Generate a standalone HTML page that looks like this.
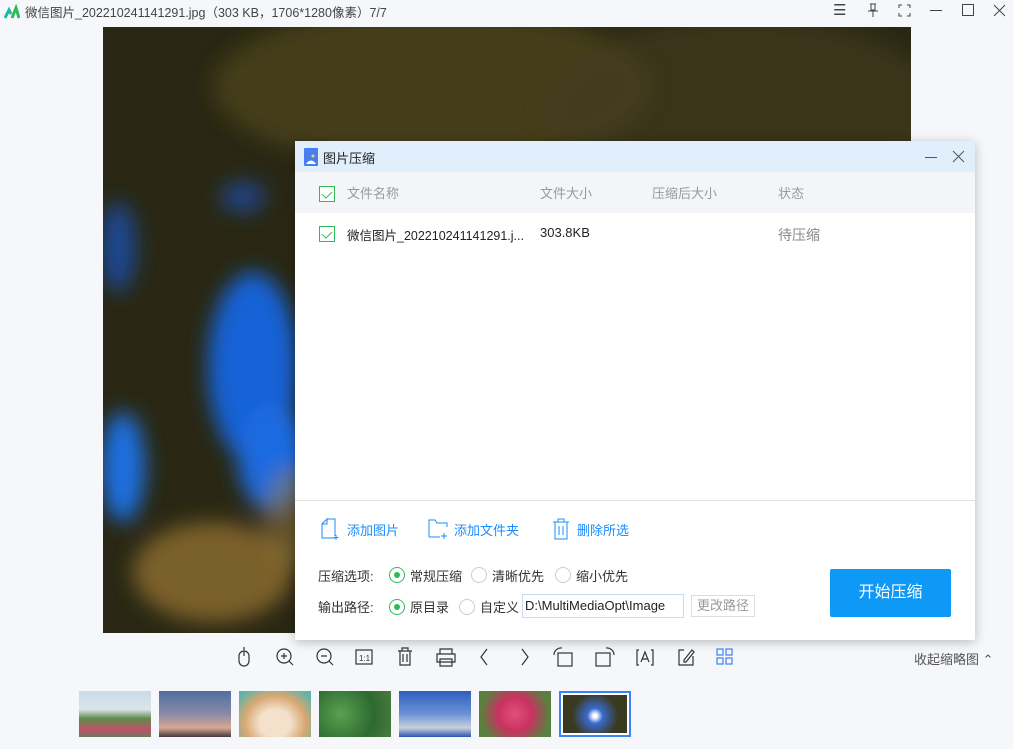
<!DOCTYPE html>
<html><head><meta charset="utf-8"><style>
*{margin:0;padding:0;box-sizing:border-box}
body{width:1013px;height:749px;background:#f5f7fa;position:relative;overflow:hidden;font-family:"Liberation Sans","Noto Sans CJK SC",sans-serif;font-size:13px;color:#333}
.abs{position:absolute;white-space:nowrap}
.dlg{left:295px;top:141px;width:680px;height:499px;background:#fff;box-shadow:0 2px 10px rgba(0,0,0,.25)}
.cb{position:absolute;width:16px;height:16px;border:1px solid #2dbb5a;background:#fff}
.cb:after{content:"";position:absolute;left:4px;top:2px;width:5px;height:8px;border:solid #2dbb5a;border-width:0 1.3px 1.3px 0;transform:rotate(45deg)}
.rad{position:absolute;width:16px;height:16px;border:1px solid #ccc;border-radius:50%;background:#fff}
.rad.on{border-color:#2dbb5a}
.rad.on:after{content:"";position:absolute;left:4px;top:4px;width:6px;height:6px;border-radius:50%;background:#2dbb5a}
.blue{color:#1a8cff}
.thumb{position:absolute;top:691px;width:72px;height:46px}
svg{position:absolute}
</style></head><body>
<svg style="left:4px;top:4px" width="16" height="16" viewBox="0 0 16 16"><path d="M1 14 L5 6 L7 10" stroke="#1db9a0" stroke-width="3" fill="none"/><path d="M8 14 L12 4 L15 14" stroke="#2dbb5a" stroke-width="3" fill="none"/></svg>
<div class="abs" style="left:25px;top:2px;font-size:12.5px;color:#444">微信图片_202210241141291.jpg（303 KB，1706*1280像素）7/7</div>
<div class="abs" style="left:833px;top:1px;font-size:15px;color:#444">☰</div>
<svg style="left:866px;top:3px" width="14" height="14" viewBox="0 0 14 14"><path d="M4 1h6M5 1v6h4V1M2 8h10M7 8v6" stroke="#444" fill="none"/></svg>
<svg style="left:898px;top:4px" width="13" height="13" viewBox="0 0 13 13"><path d="M1 4V1h3M9 1h3v3M12 9v3H9M4 12H1V9" stroke="#444" fill="none"/></svg>
<div class="abs" style="left:930px;top:10px;width:12px;height:1px;background:#444"></div>
<div class="abs" style="left:962px;top:4px;width:12px;height:12px;border:1px solid #444"></div>
<svg style="left:993px;top:4px" width="13" height="13"><path d="M1 1L12 12M12 1L1 12" stroke="#444"/></svg>
<svg style="left:103px;top:27px" width="808" height="606" viewBox="0 0 808 606">
<defs><filter id="b" x="-50%" y="-50%" width="200%" height="200%"><feGaussianBlur stdDeviation="10"/></filter><clipPath id="c"><rect width="808" height="606"/></clipPath></defs>
<rect width="808" height="606" fill="#2a2814"/>
<g clip-path="url(#c)"><g filter="url(#b)">
<ellipse cx="330" cy="60" rx="220" ry="80" fill="#4e4620" opacity=".7"/>
<ellipse cx="640" cy="80" rx="200" ry="90" fill="#433d1c" opacity=".6"/>
<ellipse cx="150" cy="340" rx="45" ry="95" fill="#1462d6"/>
<ellipse cx="170" cy="430" rx="35" ry="55" fill="#1a6ae0"/>
<ellipse cx="20" cy="440" rx="22" ry="55" fill="#1d6fe0"/>
<ellipse cx="15" cy="220" rx="18" ry="45" fill="#1a50b0" opacity=".8"/>
<ellipse cx="140" cy="170" rx="22" ry="15" fill="#2050b8" opacity=".7"/>
<ellipse cx="110" cy="545" rx="80" ry="50" fill="#8e6e30" opacity=".8"/>
<ellipse cx="190" cy="490" rx="30" ry="50" fill="#9a7c40" opacity=".5"/>
</g></g></svg>
<div class="abs dlg">
 <div class="abs" style="left:0;top:0;width:680px;height:31px;background:#e1eefb"></div>
 <svg style="left:9px;top:7px" width="14" height="18" viewBox="0 0 14 18"><rect x="0" y="0" width="14" height="18" rx="1" fill="#4a7ef0"/><path d="M2 16 Q7 9 12 16Z" fill="#fff"/><circle cx="9" cy="8" r="1.5" fill="#ffd24a"/></svg>
 <div class="abs" style="left:28px;top:7px;font-size:13px;color:#222">图片压缩</div>
 <div class="abs" style="left:630px;top:16px;width:12px;height:1px;background:#555"></div>
 <svg style="left:657px;top:9px" width="13" height="13"><path d="M1 1L12 12M12 1L1 12" stroke="#555"/></svg>
 <div class="abs" style="left:0;top:31px;width:680px;height:41px;background:#f4f5f9"></div>
 <div class="cb" style="left:24px;top:45px"></div>
 <div class="abs" style="left:52px;top:42px;color:#999">文件名称</div>
 <div class="abs" style="left:245px;top:42px;color:#999">文件大小</div>
 <div class="abs" style="left:357px;top:42px;color:#999">压缩后大小</div>
 <div class="abs" style="left:483px;top:42px;color:#999">状态</div>
 <div class="cb" style="left:24px;top:85px"></div>
 <div class="abs" style="left:52px;top:84px;color:#222;font-size:12.5px">微信图片_202210241141291.j...</div>
 <div class="abs" style="left:245px;top:84px;color:#222">303.8KB</div>
 <div class="abs" style="left:483px;top:84px;color:#888;font-size:14px">待压缩</div>
 <div class="abs" style="left:0;top:359px;width:680px;height:1px;background:#e2e2e2"></div>
 <svg style="left:26px;top:377px" width="20" height="22" viewBox="0 0 20 22"><path d="M6 1h8v17M14 20H1V6L6 1V6H1" stroke="#1a8cff" fill="none"/><path d="M15 17v5M12.5 19.5h5" stroke="#1a8cff"/></svg>
 <div class="abs blue" style="left:52px;top:379px">添加图片</div>
 <svg style="left:133px;top:378px" width="22" height="20" viewBox="0 0 22 20"><path d="M1 18V1h6l2 3h10v4M12 18H1" stroke="#1a8cff" fill="none"/><path d="M16 14v6M13 17h6" stroke="#1a8cff"/></svg>
 <div class="abs blue" style="left:159px;top:379px">添加文件夹</div>
 <svg style="left:257px;top:377px" width="18" height="22" viewBox="0 0 18 22"><path d="M1 4h16M6 4V1h6v3M3 4v17h12V4M7 8v9M11 8v9" stroke="#1a8cff" fill="none"/></svg>
 <div class="abs blue" style="left:282px;top:379px">删除所选</div>
 <div class="abs" style="left:23px;top:425px">压缩选项:</div>
 <div class="rad on" style="left:94px;top:426px"></div><div class="abs" style="left:115px;top:425px">常规压缩</div>
 <div class="rad" style="left:176px;top:426px"></div><div class="abs" style="left:197px;top:425px">清晰优先</div>
 <div class="rad" style="left:260px;top:426px"></div><div class="abs" style="left:281px;top:425px">缩小优先</div>
 <div class="abs" style="left:23px;top:456px">输出路径:</div>
 <div class="rad on" style="left:94px;top:458px"></div><div class="abs" style="left:115px;top:456px">原目录</div>
 <div class="rad" style="left:164px;top:458px"></div><div class="abs" style="left:185px;top:456px">自定义</div>
 <div class="abs" style="left:227px;top:453px;width:162px;height:24px;border:1px solid #c9daf0;padding:3px 2px;color:#222">D:\MultiMediaOpt\Image</div>
 <div class="abs" style="left:396px;top:454px;width:64px;height:22px;border:1px solid #ddd;color:#999;text-align:center;line-height:20px">更改路径</div>
 <div class="abs" style="left:535px;top:428px;width:121px;height:48px;background:#0d99f5;border-radius:2px;color:#fff;font-size:16px;text-align:center;line-height:48px">开始压缩</div>
</div>
<svg style="left:236px;top:646px" width="470" height="22" viewBox="0 0 470 22" fill="none" stroke="#333" stroke-width="1.2">
<rect x="3" y="5" width="10" height="15" rx="5"/><path d="M8 5v5M8 1v3"/>
<circle cx="48" cy="10" r="7"/><path d="M53 15l4 4M45 10h6M48 7v6"/>
<circle cx="88" cy="10" r="7"/><path d="M93 15l4 4M85 10h6"/>
<rect x="120" y="4" width="16" height="14"/><text x="123" y="15" font-size="8" fill="#333" stroke="none" font-family="Liberation Sans">1:1</text>
<path d="M162 5h14M166 5V2h6v3M164 5v14h10V5M167 8v8M171 8v8"/>
<path d="M201 8h18v8h-18zM204 8V3h12v5M204 13h12v7h-12z"/>
<path d="M251 3l-6 8 6 8"/><path d="M286 3l6 8-6 8"/>
<rect x="322" y="7" width="14" height="13"/><path d="M318 9a7 7 0 0 1 8-7"/>
<rect x="360" y="7" width="14" height="13"/><path d="M378 9a7 7 0 0 0-8-7"/>
<path d="M403 4h-2v15h2M415 4h2v15h-2M405 16l4-10 4 10M406.5 13h5"/>
<path d="M448 4h-5v15h14V10"/><path d="M448 14l8-10 2 2-8 10h-2z"/>
</svg>
<svg style="left:716px;top:648px" width="18" height="18" stroke="#3b82f6" fill="none" stroke-width="1.2"><rect x="1" y="1" width="6" height="6"/><rect x="10" y="1" width="6" height="6"/><rect x="1" y="10" width="6" height="6"/><rect x="10" y="10" width="6" height="6"/></svg>
<div class="abs" style="left:914px;top:649px;color:#555;font-size:13px">收起缩略图 ⌃</div>
<div class="thumb" style="left:79px;background:linear-gradient(180deg,#c9dbe8 0%,#dbe4ea 40%,#5f8a4a 60%,#c0506a 85%,#6a7a5a)"></div>
<div class="thumb" style="left:159px;background:linear-gradient(180deg,#4e6fa0,#8a8aa8 50%,#d8a890 80%,#443a40)"></div>
<div class="thumb" style="left:239px;background:radial-gradient(ellipse at 50% 70%,#f3e1cc 30%,#d9a872 60%,#5fb3a8 90%)"></div>
<div class="thumb" style="left:319px;background:radial-gradient(circle at 30% 50%,#5aa050,#2d6a30 60%,#4a7a40)"></div>
<div class="thumb" style="left:399px;background:linear-gradient(180deg,#2e5fbf,#6c92d6 50%,#c8d0dc 80%,#2a55b0)"></div>
<div class="thumb" style="left:479px;background:radial-gradient(circle at 50% 50%,#e2507a,#c83260 40%,#5a8040 80%)"></div>
<div class="thumb" style="left:559px;border:2px solid #3b82f6;background:#fff;padding:2px"><div style="width:100%;height:100%;background:radial-gradient(circle at 50% 55%,#fff 5%,#3a6ad0 20%,#3a3a20 60%)"></div></div>
</body></html>
